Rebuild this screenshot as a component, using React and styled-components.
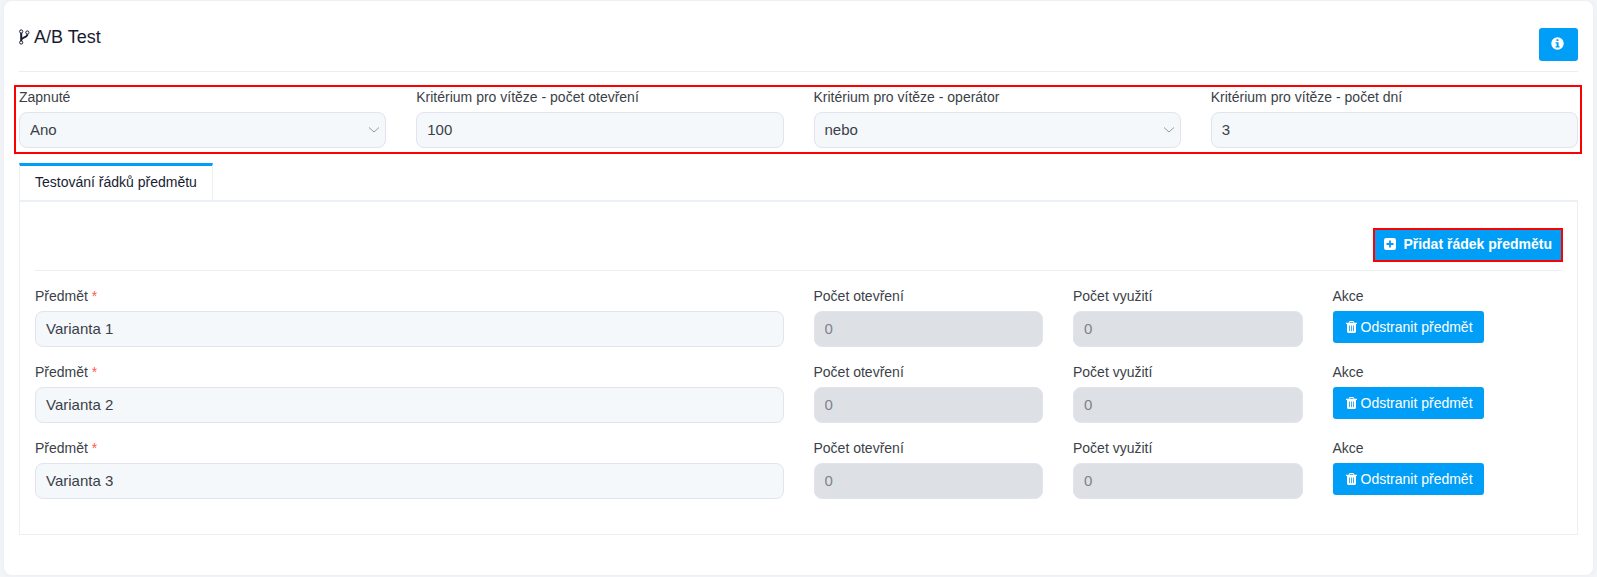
import React, { useState } from 'react';
import styled, { createGlobalStyle } from 'styled-components';

const GlobalStyle = createGlobalStyle`
    * {
        box-sizing: border-box;
    }

    body {
        margin: 0;
        background: #f3f5f8;
        color: #3b3f48;
        font-family: "Liberation Sans", Arial, sans-serif;
        font-size: 14px;
        line-height: 21px;
    }

    button, input, select {
        font-family: inherit;
    }
`;

const Page = styled.main`
    padding: 1px 4px 2px;
`;

const Card = styled.section`
    background: #fff;
    border-radius: 8px;
    box-shadow: 0 0 6px #e6ebf1;
    padding: 27px 15px 40px;
`;

const Header = styled.header`
    display: flex;
    align-items: flex-start;
    justify-content: space-between;
    border-bottom: 1px solid #ebedf0;
    padding-bottom: 10px;
    margin-bottom: 13px;
`;

const Title = styled.h1`
    display: flex;
    align-items: center;
    gap: 4px;
    margin: 0;
    color: #181c32;
    font-size: 18px;
    font-weight: 400;
    line-height: 18px;
`;

const Button = styled.button`
    display: inline-flex;
    align-items: center;
    justify-content: center;
    gap: 4px;
    height: 32px;
    padding: 0 11px 0 13px;
    border: 0;
    border-radius: 3px;
    background: #009ef7;
    color: #fff;
    font-size: 14px;
    line-height: 21px;
    white-space: nowrap;
    cursor: pointer;
`;

const InfoButton = styled(Button)`
    width: 39px;
    height: 33px;
    padding: 0 3px 2px 0;
`;

const AddButton = styled(Button)`
    gap: 7px;
    height: 34px;
    margin-right: -1px;
    padding: 0 9px 2px;
    border: 2px solid #f00;
    border-radius: 0;
    font-weight: 700;
`;

const Criteria = styled.div`
    display: grid;
    grid-template-columns: repeat(4, 1fr);
    gap: 30px;
    margin: 0 -4px 9px -5px;
    padding: 0 2px 4px 3px;
    border: 2px solid #f00;
`;

const Field = styled.div`
    display: flex;
    flex-direction: column;
    align-items: ${({ $start }) => ($start ? 'flex-start' : 'stretch')};
    gap: 4px;
    min-width: 0;
    grid-column: span ${({ $span }) => $span || 1};
`;

const Required = styled.span`
    color: #ff5b4f;
`;

const Input = styled.input`
    width: 100%;
    height: 36px;
    padding: 0 10px 2px;
    border: 1px solid #e1e4ee;
    border-radius: 8px;
    background: #f4f8fb;
    color: #3b3f48;
    font-size: 15px;

    &:disabled {
        background: #dde0e5;
        color: #7e828c;
    }
`;

const SelectBox = styled.div`
    display: grid;
    align-items: center;

    > * {
        grid-area: 1 / 1;
    }

    svg {
        justify-self: end;
        margin-right: 6px;
        pointer-events: none;
    }
`;

const Select = styled(Input)`
    appearance: none;
`;

const Tabs = styled.div`
    display: flex;
`;

const Tab = styled.button`
    height: 37px;
    padding: 0 15px 2px;
    border: 1px solid #ebf0f6;
    border-top: 3px solid #009ef7;
    border-bottom: 0;
    background: #fff;
    color: #181c32;
    font-size: 14px;
    line-height: 21px;
`;

const Panel = styled.div`
    padding: 26px 15px 20px;
    border: 1px solid #ebf0f4;
    border-top: 2px solid #ebf0f6;
`;

const Toolbar = styled.div`
    display: flex;
    justify-content: flex-end;
    padding-bottom: 8px;
    margin-bottom: 15px;
    border-bottom: 1px solid #ebedf0;
`;

const Row = styled.div`
    display: grid;
    grid-template-columns: repeat(12, 1fr);
    column-gap: 30px;
    margin-bottom: 15px;
`;

const ForkIcon = () => (
    <svg width="11" height="16" viewBox="0 0 11 16" fill="none" stroke="#181c32" aria-hidden="true">
        <circle cx="2.2" cy="2.5" r="1.6" />
        <circle cx="8.4" cy="3.5" r="1.6" />
        <circle cx="2.2" cy="13.5" r="1.6" />
        <path d="M2.2 4v8" strokeWidth="2" />
        <path d="M8.4 5.2c0 3.8-5.4 2.6-5.7 5.4" strokeWidth="1.8" />
    </svg>
);

const InfoIcon = () => (
    <svg width="13" height="13" viewBox="0 0 13 13" aria-hidden="true">
        <circle cx="6.5" cy="6.5" r="6.2" fill="#fff" />
        <path d="M5.5 2.3h2v1.7h-2zM4.6 5.2h3v4h1v1.4h-4V9.2h1V6.6h-1z" fill="#009ef7" />
    </svg>
);

const PlusIcon = () => (
    <svg width="12" height="12" viewBox="0 0 12 12" aria-hidden="true">
        <rect width="12" height="12" rx="2.2" fill="#fff" />
        <path d="M6 2.5v7M2.5 6h7" stroke="#009ef7" strokeWidth="1.8" />
    </svg>
);

const TrashIcon = () => (
    <svg width="11" height="12" viewBox="0 0 11 12" aria-hidden="true">
        <path d="M3.2 2V1.3Q3.2.5 4 .5h3q.8 0 .8.8V2" fill="none" stroke="#fff" />
        <path d="M0 1.8h11V3H0zM1 3h9v7.6q0 1.4-1.3 1.4H2.3Q1 12 1 10.6z" fill="#fff" />
        <path d="M3.5 4.5v5.7M5.5 4.5v5.7M7.5 4.5v5.7" stroke="#009ef7" strokeWidth=".8" />
    </svg>
);

const Chevron = () => (
    <svg width="12" height="8" viewBox="0 0 12 8" fill="none" stroke="#999" aria-hidden="true">
        <path d="M1 1.5l5 4.5 5-4.5" />
    </svg>
);

const InputField = ({ id, label, value, disabled, required, span }) => (
    <Field $span={span}>
        <label htmlFor={id}>
            {label}{required && <Required> *</Required>}
        </label>
        <Input id={id} defaultValue={value} disabled={disabled} required={required} />
    </Field>
);

const SelectField = ({ id, label, options }) => (
    <Field>
        <label htmlFor={id}>{label}</label>
        <SelectBox>
            <Select as="select" id={id}>
                {options.map(option => <option key={option}>{option}</option>)}
            </Select>
            <Chevron />
        </SelectBox>
    </Field>
);

const SubjectRow = ({ id, name, onRemove }) => (
    <Row>
        <InputField id={`subject-${id}`} label="Předmět" value={name} required span={6} />
        <InputField id={`opened-${id}`} label="Počet otevření" value="0" disabled span={2} />
        <InputField id={`used-${id}`} label="Počet využití" value="0" disabled span={2} />
        <Field $span={2} $start>
            <span>Akce</span>
            <Button type="button" onClick={onRemove}>
                <TrashIcon />
                Odstranit předmět
            </Button>
        </Field>
    </Row>
);

const App = () => {
    const [subjects, setSubjects] = useState([
        { id: 1, name: 'Varianta 1' },
        { id: 2, name: 'Varianta 2' },
        { id: 3, name: 'Varianta 3' },
    ]);

    const add = () => setSubjects([...subjects, { id: Date.now(), name: '' }]);
    const remove = id => setSubjects(subjects.filter(subject => subject.id !== id));

    return (
        <Page>
            <GlobalStyle />
            <Card>
                <Header>
                    <Title><ForkIcon />A/B Test</Title>
                    <InfoButton type="button" aria-label="Info">
                        <InfoIcon />
                    </InfoButton>
                </Header>
                <Criteria>
                    <SelectField id="enabled" label="Zapnuté" options={['Ano', 'Ne']} />
                    <InputField id="opens" label="Kritérium pro vítěze - počet otevření" value="100" />
                    <SelectField id="operator" label="Kritérium pro vítěze - operátor" options={['nebo', 'a']} />
                    <InputField id="days" label="Kritérium pro vítěze - počet dní" value="3" />
                </Criteria>
                <Tabs role="tablist">
                    <Tab type="button" role="tab" aria-selected="true">Testování řádků předmětu</Tab>
                </Tabs>
                <Panel role="tabpanel">
                    <Toolbar>
                        <AddButton type="button" onClick={add}>
                            <PlusIcon />
                            Přidat řádek předmětu
                        </AddButton>
                    </Toolbar>
                    {subjects.map(({ id, name }) => (
                        <SubjectRow key={id} id={id} name={name} onRemove={() => remove(id)} />
                    ))}
                </Panel>
            </Card>
        </Page>
    );
};

export default App;
